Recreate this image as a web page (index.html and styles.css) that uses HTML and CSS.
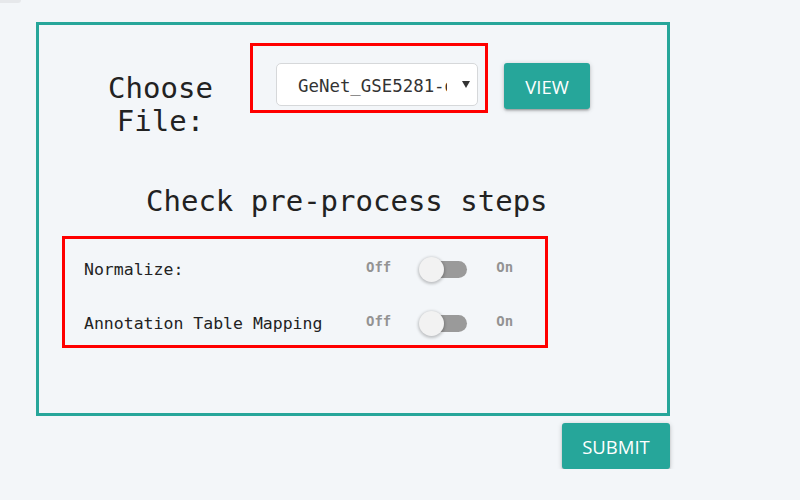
FILE: index.html
```html
<!DOCTYPE html>
<html>
<head>
<meta charset="utf-8">
<link rel="stylesheet" href="styles.css">
</head>
<body>
<div class="corner"></div>
<div class="page">
  <div class="panel">
    <div class="top-row">
      <div class="choose-label">Choose<br>File:</div>
      <div class="highlight highlight-select">
        <div class="select">
          <span class="select-text"><span>GeNet_GSE5281-data.csv</span></span>
          <span class="select-arrow"></span>
        </div>
      </div>
      <button class="btn btn-view">VIEW</button>
    </div>
    <h2 class="steps-title">Check pre-process steps</h2>
    <div class="highlight highlight-steps">
      <div class="step-row">
        <span class="step-label">Normalize:</span>
        <span class="state">Off</span>
        <span class="lever"></span>
        <span class="state">On</span>
      </div>
      <div class="step-row">
        <span class="step-label">Annotation Table Mapping</span>
        <span class="state">Off</span>
        <span class="lever"></span>
        <span class="state">On</span>
      </div>
    </div>
  </div>
  <div class="actions">
    <button class="btn btn-submit">SUBMIT</button>
  </div>
</div>
</body>
</html>
```

FILE: styles.css
```css
html, body {
  margin: 0;
  padding: 0;
  background: #f3f6f9;
  color: #222;
  font-family: "DejaVu Sans Mono", "Liberation Mono", monospace;
}

.corner {
  width: 21px;
  height: 3px;
  background: #e6e8eb;
  border-bottom-right-radius: 3px;
}

.page {
  margin-left: 36px;
  margin-top: 19px;
  width: 634px;
}

.panel {
  box-sizing: border-box;
  width: 634px;
  height: 394px;
  border: 3px solid #26a69a;
}

.top-row {
  display: flex;
  align-items: flex-start;
}

.choose-label {
  box-sizing: border-box;
  width: 211px;
  padding-left: 32px;
  margin-top: 47px;
  text-align: center;
  font-size: 29px;
  line-height: 33px;
}

.highlight {
  box-sizing: border-box;
  border: 3px solid #ff0000;
}

.highlight-select {
  width: 238px;
  height: 70px;
  margin-top: 18px;
  padding: 17px 7px 0 23px;
}

.select {
  box-sizing: border-box;
  height: 43px;
  background: #fff;
  border: 1px solid #d6d8da;
  border-radius: 5px;
  display: flex;
  align-items: center;
  padding-left: 21px;
  padding-right: 8px;
}

.select-text {
  width: 149px;
  overflow: hidden;
  white-space: nowrap;
  font-size: 17.4px;
  line-height: 22px;
  padding-top: 2px;
  color: #333;
}

.select-arrow {
  margin-left: auto;
  width: 0;
  height: 0;
  border-left: 4px solid transparent;
  border-right: 4px solid transparent;
  border-top: 7px solid #333;
  position: relative;
  left: 1px;
}

.btn {
  border: none;
  border-radius: 3px;
  background: #26a69a;
  color: #fff;
  font-family: "Open Sans", "Noto Sans", sans-serif;
  font-size: 18.5px;
  box-shadow: 0 2px 2px 0 rgba(0,0,0,0.14), 0 3px 1px -2px rgba(0,0,0,0.12), 0 1px 5px 0 rgba(0,0,0,0.2);
  padding: 0;
  cursor: pointer;
}

.btn-view {
  width: 86px;
  height: 46px;
  margin-left: 16px;
  margin-top: 38px;
}

.steps-title {
  margin: 47px 0 0 0;
  padding-left: 107px;
  font-weight: normal;
  font-size: 29px;
  line-height: 33px;
}

.highlight-steps {
  width: 486px;
  height: 112px;
  margin: 18px 0 0 23px;
  padding: 15px 0 0 19px;
  display: flex;
  flex-direction: column;
  gap: 24px;
}

.step-row {
  height: 30px;
  display: flex;
  align-items: center;
}

.step-label {
  width: 282px;
  flex: none;
  font-size: 16.5px;
  color: #222;
}

.state {
  font-size: 14px;
  font-weight: bold;
  color: #939393;
  margin-top: -4px;
}

.lever {
  position: relative;
  width: 43px;
  height: 17px;
  border-radius: 9px;
  background: #9a9a9a;
  margin: 0 29px 0 33px;
}

.lever::after {
  content: "";
  position: absolute;
  left: -5px;
  top: -4px;
  width: 25px;
  height: 25px;
  border-radius: 50%;
  background: #f2f2f2;
  box-shadow: 0 1px 3px 1px rgba(0,0,0,0.22);
}

.actions {
  display: flex;
  justify-content: flex-end;
  margin-top: 7px;
}

.btn-submit {
  width: 108px;
  height: 46px;
}
```
